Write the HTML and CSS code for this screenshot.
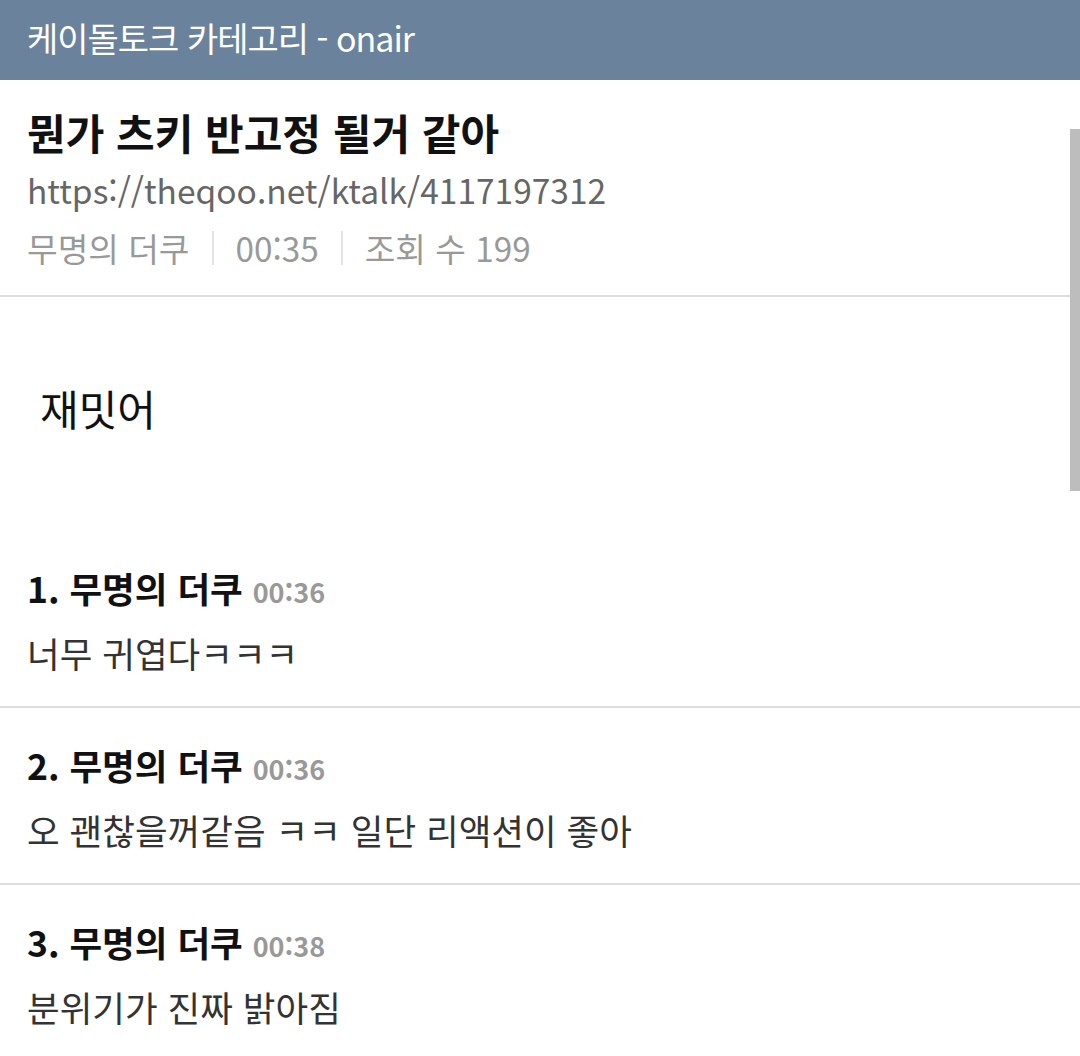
FILE: index.html
```html
<!DOCTYPE html>
<html lang="ko">
<head>
    <meta charset="UTF-8">
    <meta name="viewport" content="width=device-width, initial-scale=1.0">
    <title>케이돌토크 카테고리 - onair</title>
    <link rel="stylesheet" href="styles.css">
</head>
<body>
    <header class="top-bar">케이돌토크 카테고리 - onair</header>

    <div class="scroll-thumb"></div>

    <div class="post-head">
        <h1 class="post-title">뭔가 츠키 반고정 될거 같아</h1>
        <div class="post-url">https://theqoo.net/ktalk/4117197312</div>
        <div class="post-meta">
            <span>무명의 더쿠</span>
            <span class="sep"></span>
            <span>00:35</span>
            <span class="sep"></span>
            <span>조회 수 199</span>
        </div>
    </div>

    <div class="post-body">재밋어</div>

    <ul class="comments">
        <li class="comment">
            <div class="comment-head">1. 무명의 더쿠 <span class="comment-time">00:36</span></div>
            <div class="comment-text">너무 귀엽다ㅋㅋㅋ</div>
        </li>
        <li class="comment">
            <div class="comment-head">2. 무명의 더쿠 <span class="comment-time">00:36</span></div>
            <div class="comment-text">오 괜찮을꺼같음 ㅋㅋ 일단 리액션이 좋아</div>
        </li>
        <li class="comment">
            <div class="comment-head">3. 무명의 더쿠 <span class="comment-time">00:38</span></div>
            <div class="comment-text">분위기가 진짜 밝아짐</div>
        </li>
    </ul>
</body>
</html>
```

FILE: styles.css
```css
body {
    margin: 0;
    font-family: "Noto Sans CJK KR", "Noto Sans", sans-serif;
    background-color: #fff;
    color: #333;
    overflow: hidden;
}
.top-bar {
    height: 80px;
    line-height: 76px;
    padding: 0 27px;
    background-color: #6b829c;
    color: #fff;
    font-size: 34px;
    letter-spacing: -1px;
}
.scroll-thumb {
    position: absolute;
    top: 129px;
    right: 0;
    width: 10px;
    height: 362px;
    background-color: #bdbdbd;
}
.post-head {
    padding: 24px 27px 19px;
    border-bottom: 2px solid #ddd;
}
.post-title {
    margin: 0;
    font-size: 42px;
    line-height: 56px;
    font-weight: bold;
    color: #111;
}
.post-url {
    font-size: 33.5px;
    line-height: 60px;
    color: #666;
}
.post-meta {
    display: flex;
    align-items: center;
    gap: 22px;
    font-size: 33.3px;
    line-height: 56px;
    color: #999;
}
.post-meta .sep {
    width: 2px;
    height: 34px;
    background-color: #e3e3e3;
}
.post-body {
    padding: 86px 40px 131px;
    font-size: 42px;
    line-height: 50px;
    color: #111;
}
.comments {
    list-style: none;
    margin: 0;
    padding: 0;
}
.comment {
    padding: 0 27px 29px;
    border-bottom: 2px solid #ddd;
}
.comment + .comment {
    padding-top: 33px;
}
.comment-head {
    font-size: 35.5px;
    line-height: 48px;
    font-weight: bold;
    color: #111;
}
.comment-time {
    font-size: 27px;
    line-height: 1;
    color: #999;
}
.comment-text {
    margin-top: 17px;
    font-size: 35.5px;
    line-height: 48px;
    color: #333;
}
```
